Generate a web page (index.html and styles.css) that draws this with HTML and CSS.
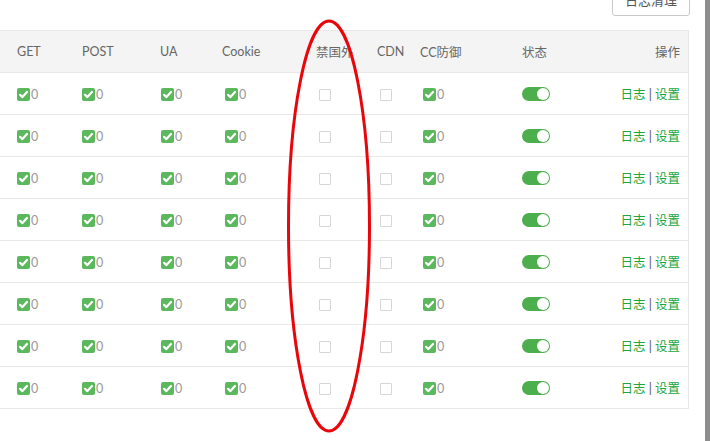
FILE: index.html
```html
<!DOCTYPE html>
<html lang="zh-CN">
<head>
  <meta charset="UTF-8" />
  <title>网站防火墙</title>
  <link rel="stylesheet" href="styles.css">
</head>
<body>
  <div class="page">
    <div class="main">
      <div class="toolbar">
        <button class="btn">日志清理</button>
      </div>

      <table class="site-table">
        <thead>
          <tr>
            <th class="c-get">GET</th>
            <th class="c-post">POST</th>
            <th class="c-ua">UA</th>
            <th class="c-cookie">Cookie</th>
            <th class="c-cn">禁国外</th>
            <th class="c-cdn">CDN</th>
            <th class="c-cc">CC防御</th>
            <th class="c-status">状态</th>
            <th class="c-ops">操作</th>
          </tr>
        </thead>
        <tbody id="rows"></tbody>
      </table>
    </div>
    <div class="edge"></div>
  </div>

  <svg class="mark" width="90" height="420" viewBox="0 0 90 420">
    <ellipse cx="45" cy="210" rx="40.5" ry="205" fill="none" stroke="#e8060b" stroke-width="3"/>
  </svg>

  <script>
    const rows = document.getElementById("rows");
    const checked = '<span class="chk on"><svg width="13" height="13" viewBox="0 0 13 13"><path d="M3 6.8 L5.4 9.1 L10 4" fill="none" stroke="#fff" stroke-width="2.2" stroke-linecap="round" stroke-linejoin="round"/></svg></span><span class="num">0</span>';
    const empty = '<span class="chk off"></span>';

    for (let i = 0; i < 8; i++) {
      const tr = document.createElement("tr");
      tr.innerHTML =
        `<td>${checked}</td>` +
        `<td>${checked}</td>` +
        `<td>${checked}</td>` +
        `<td>${checked}</td>` +
        `<td class="pad">${empty}</td>` +
        `<td class="pad">${empty}</td>` +
        `<td class="pad">${checked}</td>` +
        `<td><span class="switch"><span class="knob"></span></span></td>` +
        `<td class="c-ops"><a href="#">日志</a> | <a href="#">设置</a></td>`;
      rows.appendChild(tr);
    }
  </script>
</body>
</html>
```

FILE: styles.css
```css
body {
  margin: 0;
  font-family: Lato, "Noto Sans CJK SC", sans-serif;
  font-size: 12px;
  color: #666;
  background: #fff;
  overflow: hidden;
}

.page {
  display: flex;
  height: 441px;
}

.main {
  width: 705px;
}

.edge {
  width: 5px;
  background-color: #8d8d8d;
}

.toolbar {
  display: flex;
  justify-content: flex-end;
  margin-top: -17px;
  margin-bottom: 14px;
  padding-right: 15px;
}

.btn {
  height: 33px;
  padding: 0 12px;
  border: 1px solid #c9c9c9;
  border-radius: 3px;
  background: #fff;
  color: #555;
  font-family: inherit;
  font-size: 13px;
}

.site-table {
  width: 689px;
  border-collapse: collapse;
  table-layout: fixed;
}

.site-table th,
.site-table td {
  padding: 0;
  text-align: left;
  border-top: 1px solid #e8e8e8;
  border-bottom: 1px solid #e8e8e8;
  white-space: nowrap;
}

.site-table th:last-child,
.site-table td:last-child {
  border-right: 1px solid #e8e8e8;
}

.site-table thead th {
  height: 41px;
  background-color: #f4f4f4;
  font-weight: normal;
  color: #666;
  font-size: 12.5px;
}

.site-table tbody td {
  height: 41px;
}

.c-get { width: 65px; padding-left: 17px !important; }
.c-post { width: 78px; }
.c-ua { width: 62px; }
.c-cookie { width: 94px; }
.c-cn { width: 61px; }
.c-cdn { width: 43px; }
.c-cc { width: 102px; }
.c-status { width: 90px; }
.site-table .c-ops {
  text-align: right;
  padding-right: 8px;
}

.site-table tbody td:first-child {
  padding-left: 17px;
}

.site-table td.pad {
  padding-left: 3px;
}

.site-table tbody td:nth-child(3) {
  padding-left: 1px;
}

.site-table tbody td:nth-child(4) {
  padding-left: 3px;
}

.chk {
  display: inline-block;
  width: 13px;
  height: 13px;
  vertical-align: middle;
  box-sizing: border-box;
}

.chk svg {
  display: block;
}

.chk.on {
  background-color: #5cb85c;
  border-radius: 2px;
}

.chk.off {
  width: 12px;
  height: 12px;
  border: 1px solid #d6d6d6;
  border-radius: 1px;
  background: #fff;
}

.num {
  color: #999;
  font-size: 12.5px;
  vertical-align: middle;
  margin-left: 1px;
}

.switch {
  display: inline-block;
  position: relative;
  width: 28px;
  height: 14px;
  border-radius: 7px;
  background-color: #4cae4c;
  vertical-align: middle;
}

.knob {
  position: absolute;
  right: 1px;
  top: 1px;
  width: 12px;
  height: 12px;
  border-radius: 50%;
  background: #fff;
}

.c-ops a {
  color: #20a53a;
  text-decoration: none;
}

.site-table tbody .c-ops {
  color: #555;
  font-size: 12.5px;
}

.mark {
  position: absolute;
  left: 284px;
  top: 16px;
}
```
